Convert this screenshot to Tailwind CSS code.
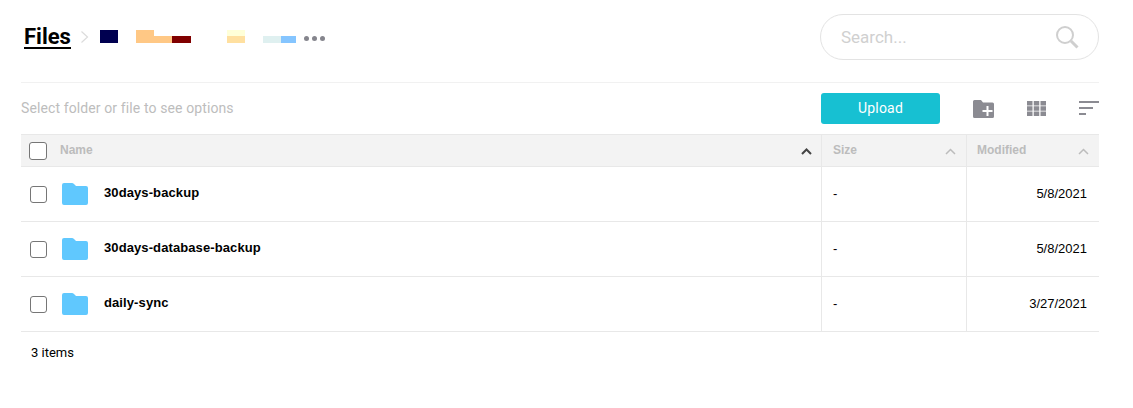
<!DOCTYPE html>
<html>
<head>
<meta charset="utf-8">
<script src="https://cdn.jsdelivr.net/npm/@tailwindcss/browser@4"></script>
</head>
<body class="bg-white font-['Roboto',sans-serif]">
<div class="w-[1133px] h-[408px] overflow-hidden pl-[21px] pr-[34px] pt-[14px]">
  <div class="flex items-center justify-between h-[46px]">
    <div class="flex items-center h-full">
      <span class="ml-[3px] text-[22px] leading-[26px] font-bold text-black border-b-2 border-black h-[25px] -mt-[1px]">Files</span>
      <svg class="ml-[9px] w-[9px] h-[14px]" viewBox="0 0 9 14" fill="none" stroke="#dcdcdc" stroke-width="1.2"><path d="M1.5 1.5 L7.5 7 L1.5 12.5"/></svg>
      <div class="ml-[11px] flex items-end h-[13px] mt-[-1px]">
        <div class="w-[18px] h-[13px] bg-[#000050]"></div>
        <div class="ml-[18px] w-[18px] h-[13px] bg-[#ffc885]"></div>
        <div class="w-[18px] h-[7px] bg-[#ffc885]"></div>
        <div class="w-[19px] h-[7px] bg-[#800000]"></div>
        <div class="ml-[36px] w-[18px] h-[13px] flex flex-col">
          <div class="h-[6px] bg-[#ffffd8]"></div>
          <div class="h-[7px] bg-[#ffe0a0]"></div>
        </div>
        <div class="ml-[18px] w-[18px] h-[7px] bg-[#dff0f0]"></div>
        <div class="w-[15px] h-[7px] bg-[#85c5ff]"></div>
        <div class="ml-[8px] mb-[2px] flex gap-[3px]">
          <div class="w-[5px] h-[5px] rounded-full bg-[#85858d]"></div>
          <div class="w-[5px] h-[5px] rounded-full bg-[#85858d]"></div>
          <div class="w-[5px] h-[5px] rounded-full bg-[#85858d]"></div>
        </div>
      </div>
    </div>
    <div class="w-[279px] h-[46px] rounded-[23px] border border-[#e3e3e3] flex items-center justify-between pl-[20px] pr-[19px]">
      <span class="text-[17px] mt-[1px] text-[#d0d0d0]">Search...</span>
      <svg class="w-[24px] h-[24px]" viewBox="0 0 24 24" fill="none" stroke="#cfcfcf"><circle cx="10" cy="10" r="8" stroke-width="2"/><path d="M16 16 L22.5 22.5" stroke-width="3"/></svg>
    </div>
  </div>
  <div class="mt-[22px] border-t border-[#f1f1f1] h-[52px] flex items-center justify-between">
    <span class="text-[14px] tracking-[0.11px] text-[#bdbdbd]">Select folder or file to see options</span>
    <div class="flex items-center">
      <button class="w-[119px] h-[31px] rounded-[3px] bg-[#17c0d2] text-white text-[14px] font-normal tracking-[0.2px]">Upload</button>
      <svg class="ml-[33px] w-[21px] h-[18px]" viewBox="0 0 21 18"><path fill="#8b8b92" d="M1.5 0 H8 L10 2.5 H19.5 Q21 2.5 21 4 V16.5 Q21 18 19.5 18 H1.5 Q0 18 0 16.5 V1.5 Q0 0 1.5 0Z"/><path stroke="#fff" stroke-width="2" d="M14.5 6 V16 M9.500 11 H19.500"/></svg>
      <svg class="ml-[33px] w-[19px] h-[15px]" viewBox="0 0 19 15" fill="#8b8b92"><rect width="5.500" height="4.500"/><rect x="6.750" width="5.500" height="4.500"/><rect x="13.500" width="5.500" height="4.500"/><rect y="5.250" width="5.500" height="4.500"/><rect x="6.750" y="5.250" width="5.500" height="4.500"/><rect x="13.500" y="5.250" width="5.500" height="4.500"/><rect y="10.500" width="5.500" height="4.500"/><rect x="6.750" y="10.500" width="5.500" height="4.500"/><rect x="13.500" y="10.500" width="5.500" height="4.500"/></svg>
      <svg class="ml-[33px] w-[20px] h-[15px]" viewBox="0 0 20 15" fill="#8b8b92"><rect width="20" height="2"/><rect y="6" width="14" height="2"/><rect y="12" width="7" height="2"/></svg>
    </div>
  </div>
  <div class="w-[1078px]">
    <div class="grid grid-cols-[800px_145px_133px] h-[33px] bg-[#f3f3f3] border-y border-[#e8e8e8] text-[12px] font-bold text-[#bcbcbc] font-['Liberation_Sans',sans-serif]">
      <div class="flex items-center justify-between pl-[8px] pr-[9px]">
        <div class="flex items-center">
          <span class="w-[18px] h-[18px] rounded-[3px] border border-[#767676] bg-white"></span>
          <span class="ml-[13px] -mt-[2px]">Name</span>
        </div>
        <svg class="w-[11px] h-[7px] mt-[2px]" viewBox="0 0 11 7" fill="none" stroke="#444" stroke-width="2"><path d="M1 6 L5.500 1.500 L10 6"/></svg>
      </div>
      <div class="flex items-center justify-between pl-[11px] pr-[10px] border-l border-[#e8e8e8]">
        <span class="-mt-[2px]">Size</span>
        <svg class="w-[11px] h-[7px] mt-[2px]" viewBox="0 0 11 7" fill="none" stroke="#bcbcbc" stroke-width="1.500"><path d="M1 6 L5.500 1.500 L10 6"/></svg>
      </div>
      <div class="flex items-center justify-between pl-[10px] pr-[10px] border-l border-[#e8e8e8]">
        <span class="-mt-[2px]">Modified</span>
        <svg class="w-[11px] h-[7px] mt-[2px]" viewBox="0 0 11 7" fill="none" stroke="#bcbcbc" stroke-width="1.500"><path d="M1 6 L5.500 1.500 L10 6"/></svg>
      </div>
    </div>
    <div class="grid grid-cols-[800px_145px_133px] h-[55px] border-b border-[#e8e8e8] text-[13px] text-black font-['Liberation_Sans',sans-serif]">
      <div class="flex items-center pl-[9px]">
        <span class="w-[17px] h-[17px] rounded-[3px] border border-[#767676] bg-white"></span>
        <svg class="ml-[15px] w-[26px] h-[22px]" viewBox="0 0 26 22"><path fill="#60c8fe" d="M2 0 H10 Q11 0 12 1 L14 3 H24 Q26 3 26 5 V20 Q26 22 24 22 H2 Q0 22 0 20 V2 Q0 0 2 0Z"/></svg>
        <span class="ml-[16px] -mt-[3px] font-bold tracking-[0.1px]">30days-backup</span>
      </div>
      <div class="flex items-center pl-[11px] border-l border-[#e8e8e8]">-</div>
      <div class="flex items-center justify-end pr-[12px] border-l border-[#e8e8e8]">5/8/2021</div>
    </div>
    <div class="grid grid-cols-[800px_145px_133px] h-[55px] border-b border-[#e8e8e8] text-[13px] text-black font-['Liberation_Sans',sans-serif]">
      <div class="flex items-center pl-[9px]">
        <span class="w-[17px] h-[17px] rounded-[3px] border border-[#767676] bg-white"></span>
        <svg class="ml-[15px] w-[26px] h-[22px]" viewBox="0 0 26 22"><path fill="#60c8fe" d="M2 0 H10 Q11 0 12 1 L14 3 H24 Q26 3 26 5 V20 Q26 22 24 22 H2 Q0 22 0 20 V2 Q0 0 2 0Z"/></svg>
        <span class="ml-[16px] -mt-[3px] font-bold tracking-[0.1px]">30days-database-backup</span>
      </div>
      <div class="flex items-center pl-[11px] border-l border-[#e8e8e8]">-</div>
      <div class="flex items-center justify-end pr-[12px] border-l border-[#e8e8e8]">5/8/2021</div>
    </div>
    <div class="grid grid-cols-[800px_145px_133px] h-[55px] border-b border-[#e8e8e8] text-[13px] text-black font-['Liberation_Sans',sans-serif]">
      <div class="flex items-center pl-[9px]">
        <span class="w-[17px] h-[17px] rounded-[3px] border border-[#767676] bg-white"></span>
        <svg class="ml-[15px] w-[26px] h-[22px]" viewBox="0 0 26 22"><path fill="#60c8fe" d="M2 0 H10 Q11 0 12 1 L14 3 H24 Q26 3 26 5 V20 Q26 22 24 22 H2 Q0 22 0 20 V2 Q0 0 2 0Z"/></svg>
        <span class="ml-[16px] -mt-[3px] font-bold tracking-[0.1px]">daily-sync</span>
      </div>
      <div class="flex items-center pl-[11px] border-l border-[#e8e8e8]">-</div>
      <div class="flex items-center justify-end pr-[12px] border-l border-[#e8e8e8]">3/27/2021</div>
    </div>
    <div class="pl-[10px] pt-[14px] text-[13px] leading-[14px] text-black font-['Roboto',sans-serif]">3 items</div>
  </div>
</div>
</body>
</html>
